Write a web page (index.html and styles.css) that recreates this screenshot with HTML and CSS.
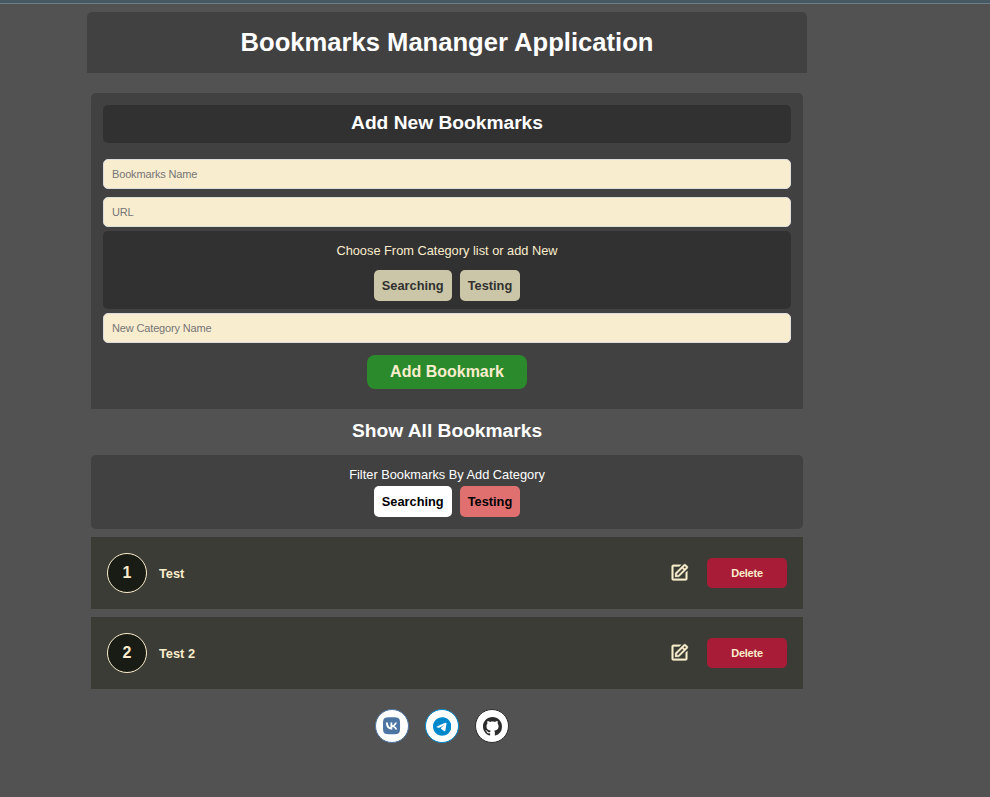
FILE: index.html
```html
<!DOCTYPE html>
<html lang="en">
<head>
<meta charset="utf-8">
<title>Bookmarks Mananger Application</title>
<link rel="stylesheet" href="styles.css">
</head>
<body>
<div class="topbar"></div>
<div class="container">
  <header class="header"><h1>Bookmarks Mananger Application</h1></header>
  <main class="main">
    <form class="form">
      <h2 class="form-title">Add New Bookmarks</h2>
      <input class="field" type="text" placeholder="Bookmarks Name">
      <input class="field" type="text" placeholder="URL">
      <div class="choose">
        <p>Choose From Category list or add New</p>
        <div class="tags"><span class="tag">Searching</span><span class="tag">Testing</span></div>
      </div>
      <input class="field" type="text" placeholder="New Category Name">
      <button class="add" type="button">Add Bookmark</button>
    </form>
    <h2 class="list-title">Show All Bookmarks</h2>
    <section class="filter">
      <p>Filter Bookmarks By Add Category</p>
      <div class="tags"><span class="tag white">Searching</span><span class="tag red">Testing</span></div>
    </section>
    <article class="item">
      <span class="num">1</span><span class="name">Test</span>
      <svg class="edit" viewBox="0 0 24 24"><path d="m7 17.013 4.413-.015 9.632-9.540c.378-.378.586-.88.586-1.414s-.208-1.036-.586-1.414l-1.586-1.586c-.756-.756-2.075-.752-2.825-.003L7 12.583v4.430zM18.045 4.458l1.589 1.583-1.597 1.582-1.586-1.585 1.594-1.580zM9 13.417l6.030-5.973 1.586 1.586-6.029 5.971L9 15.006v-1.589z"/><path d="M5 21h14c1.103 0 2-.897 2-2v-8.668l-2 2V19H5V5h6.847l2-2H5c-1.103 0-2 .897-2 2v14c0 1.103.897 2 2 2z"/></svg>
      <button class="delete" type="button">Delete</button>
    </article>
    <article class="item">
      <span class="num">2</span><span class="name">Test 2</span>
      <svg class="edit" viewBox="0 0 24 24"><path d="m7 17.013 4.413-.015 9.632-9.540c.378-.378.586-.88.586-1.414s-.208-1.036-.586-1.414l-1.586-1.586c-.756-.756-2.075-.752-2.825-.003L7 12.583v4.430zM18.045 4.458l1.589 1.583-1.597 1.582-1.586-1.585 1.594-1.580zM9 13.417l6.030-5.973 1.586 1.586-6.029 5.971L9 15.006v-1.589z"/><path d="M5 21h14c1.103 0 2-.897 2-2v-8.668l-2 2V19H5V5h6.847l2-2H5c-1.103 0-2 .897-2 2v14c0 1.103.897 2 2 2z"/></svg>
      <button class="delete" type="button">Delete</button>
    </article>
  </main>
  <footer class="social">
    <a class="vk"><svg viewBox="0 0 448 512"><path fill-rule="evenodd" d="M31.500 63.500C0 95 0 145.700 0 247v18c0 101.300 0 152 31.500 183.500C63 480 113.700 480 215 480h18c101.300 0 152 0 183.500-31.500C448 417 448 366.300 448 265v-18c0-101.300 0-152-31.500-183.500C385 32 334.300 32 233 32h-18C113.700 32 63 32 31.500 63.500zM75.600 168.300h51.100c1.700 85.500 39.400 121.700 69.300 129.200V168.300h48.200v73.700c29.500-3.200 60.500-36.800 71-73.700h48.200c-8 45.600-41.700 79.200-65.600 93 23.900 11.200 62.200 40.500 76.800 91.700h-53c-11.400-35.500-39.800-62.900-77.300-66.700v66.700h-5.800c-102.100 0-160.400-70-162.800-184.600z"/></svg></a>
    <a class="tg"><svg viewBox="0 0 496 512"><path d="M248 8C111 8 0 119 0 256s111 248 248 248 248-111 248-248S385 8 248 8zm115 169c-4 39-20 134-28 178-4 19-10 25-17 26-14 1-25-9-39-18-22-15-34-24-55-38-24-16-8-25 6-40 3-4 67-61 68-67 0-1 0-3-1-4s-4-1-5-1q-3 1-105 70c-10 7-19 10-27 10-9 0-26-5-39-9-16-5-28-8-27-17q1-7 18-14 109-47 145-62c69-29 83-34 93-34 2 0 7 1 10 3 3 3 3 6 3 8z"/></svg></a>
    <a class="gh"><svg viewBox="0 0 16 16"><path d="M8 0C3.580 0 0 3.580 0 8c0 3.540 2.290 6.530 5.470 7.590.4.070.55-.17.550-.38 0-.19-.01-.82-.01-1.490-2.010.37-2.530-.49-2.690-.94-.09-.23-.48-.94-.82-1.130-.28-.15-.68-.52-.01-.53.63-.01 1.080.58 1.230.82.720 1.210 1.870.87 2.330.66.070-.52.280-.87.510-1.070-1.780-.2-3.640-.89-3.640-3.950 0-.87.310-1.590.820-2.150-.08-.2-.36-1.020.080-2.120 0 0 .67-.21 2.200.82.640-.18 1.320-.27 2-.27s1.360.09 2 .27c1.530-1.040 2.200-.82 2.200-.82.440 1.100.16 1.920.08 2.120.51.560.82 1.270.82 2.150 0 3.070-1.870 3.750-3.650 3.950.29.250.54.730.54 1.480 0 1.070-.01 1.930-.01 2.200 0 .21.150.46.550.38A8.010 8.010 0 0 0 16 8c0-4.420-3.580-8-8-8z"/></svg></a>
  </footer>
</div>
</body>
</html>
```

FILE: styles.css
```css
* { box-sizing: border-box; margin: 0; padding: 0; }
body { background: #525252; font-family: "Liberation Sans", Arial, sans-serif; min-height: 797px; color: #fff; font-size: 12.800px; overflow: hidden; }
button, input { font-family: inherit; }
.topbar { height: 4px; background: #465862; border-bottom: 1px solid #6d7e87; }
.container { width: 720px; margin: 8px 0 0 87px; }
.header { height: 61px; background: #414141; border-radius: 5px 5px 0 0; text-align: center; }
h1 { font-size: 25.600px; line-height: 60px; }
.main { margin: 20px 4px 0; }
.form { height: 316px; background: #414141; border-radius: 5px 5px 0 0; padding: 12px; display: flex; flex-direction: column; }
.form-title { height: 38px; margin-bottom: 16px; background: #313131; border-radius: 5px; text-align: center; font-size: 19.200px; line-height: 36px; }
.field { height: 30px; border: 1px solid #ddd; border-radius: 5px; background: #f9edd0; padding: 0 8px; font-size: 11px; letter-spacing: -0.150px; color: #444; outline: none; }
.field::placeholder { color: #757575; opacity: 1; }
.field + .field { margin-top: 8px; }
.choose { height: 78px; margin: 4px 0; padding-top: 12px; background: #313131; border-radius: 5px; text-align: center; color: #faedcd; }
.choose p, .filter p { line-height: 15px; }
.choose .tags { margin-top: 12px; }
.tags { display: flex; justify-content: center; gap: 8px; }
.tag { height: 31px; padding: 0 8px; border-radius: 5px; background: #cbc6a7; color: #313131; font-weight: bold; line-height: 31px; }
.tag.white { background: #fff; color: #000; }
.tag.red { background: #e07070; color: #000; }
.add { align-self: center; width: 160px; height: 34px; margin-top: 12px; border: 0; border-radius: 8px; background: #2a8a2c; color: #faedcd; font-size: 16px; font-weight: bold; }
.list-title { height: 46px; text-align: center; font-size: 19.200px; line-height: 44px; }
.filter { height: 74px; margin-bottom: 8px; padding-top: 12px; background: #414141; border-radius: 5px; text-align: center; }
.filter .tags { margin-top: 4px; }
.item { height: 72px; margin-bottom: 8px; padding: 0 16px; display: flex; align-items: center; background: #3c3c36; color: #faedcd; font-weight: bold; }
.num { width: 40px; height: 40px; border: 1px solid #faedcd; border-radius: 50%; background: #191b15; text-align: center; line-height: 38px; font-size: 16px; }
.name { margin-left: 12px; flex: 1; }
.edit { width: 21px; height: 21px; margin: 0 17px 2px 0; fill: #faedcd; stroke: #faedcd; stroke-width: 0.350; }
.delete { width: 80px; height: 30px; border: 0; border-radius: 5px; background: #a91c38; color: #faedcd; font-size: 11px; font-weight: bold; letter-spacing: -0.250px; }
.social { display: flex; justify-content: center; gap: 16px; margin: 20px 10px 0 0; }
.social a { width: 34px; height: 34px; border: 1px solid; border-radius: 50%; background: #fff; display: flex; align-items: center; justify-content: center; }
.social svg { height: 19px; fill: currentColor; }
.social .vk svg { height: 19.500px; margin-bottom: 1px; }
.vk { color: #4c75a3; }
.tg { color: #0088cc; }
.gh { color: #2b2b2b; }
```
